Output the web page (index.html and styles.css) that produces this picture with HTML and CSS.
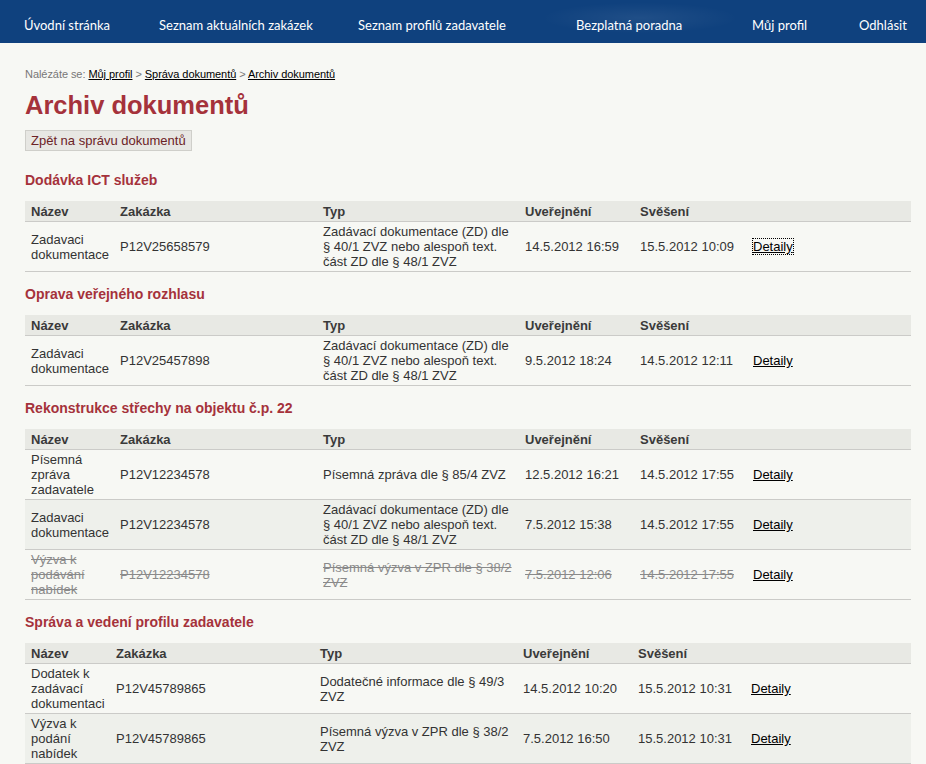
FILE: index.html
```html
<!DOCTYPE html>
<html lang="cs">
<head>
<meta charset="utf-8">
<title>Archiv dokumentů</title>
<link rel="stylesheet" href="styles.css">
</head>
<body>
<nav class="topbar">
  <a class="nav-link" href="#">Úvodní stránka</a>
  <a class="nav-link" href="#">Seznam aktuálních zakázek</a>
  <a class="nav-link" href="#">Seznam profilů zadavatele</a>
  <a class="nav-link" href="#">Bezplatná poradna</a>
  <a class="nav-link" href="#">Můj profil</a>
  <a class="nav-link" href="#">Odhlásit</a>
</nav>
<main class="content">
  <p class="breadcrumb"><span class="crumb-label">Nalézáte se:</span> <a href="#">Můj profil</a> <span class="crumb-sep">&gt;</span> <a href="#">Správa dokumentů</a> <span class="crumb-sep">&gt;</span> <a href="#">Archiv dokumentů</a></p>
  <h1 class="page-title">Archiv dokumentů</h1>
  <button class="back-btn" type="button">Zpět na správu dokumentů</button>

  <section class="tender">
    <h2 class="tender-title">Dodávka ICT služeb</h2>
    <table class="docs">
      <colgroup><col class="c-name"><col class="c-ref"><col class="c-type"><col class="c-pub"><col class="c-rem"><col class="c-act"></colgroup>
      <thead><tr><th>Název</th><th>Zakázka</th><th>Typ</th><th>Uveřejnění</th><th>Svěšení</th><th></th></tr></thead>
      <tbody>
        <tr><td>Zadavaci dokumentace</td><td>P12V25658579</td><td>Zadávací dokumentace (ZD) dle § 40/1 ZVZ nebo alespoň text. část ZD dle § 48/1 ZVZ</td><td>14.5.2012 16:59</td><td>15.5.2012 10:09</td><td><a class="detail focused" href="#">Detaily</a></td></tr>
      </tbody>
    </table>
  </section>

  <section class="tender">
    <h2 class="tender-title">Oprava veřejného rozhlasu</h2>
    <table class="docs">
      <colgroup><col class="c-name"><col class="c-ref"><col class="c-type"><col class="c-pub"><col class="c-rem"><col class="c-act"></colgroup>
      <thead><tr><th>Název</th><th>Zakázka</th><th>Typ</th><th>Uveřejnění</th><th>Svěšení</th><th></th></tr></thead>
      <tbody>
        <tr><td>Zadávaci dokumentace</td><td>P12V25457898</td><td>Zadávací dokumentace (ZD) dle § 40/1 ZVZ nebo alespoň text. část ZD dle § 48/1 ZVZ</td><td>9.5.2012 18:24</td><td>14.5.2012 12:11</td><td><a class="detail" href="#">Detaily</a></td></tr>
      </tbody>
    </table>
  </section>

  <section class="tender">
    <h2 class="tender-title">Rekonstrukce střechy na objektu č.p. 22</h2>
    <table class="docs">
      <colgroup><col class="c-name"><col class="c-ref"><col class="c-type"><col class="c-pub"><col class="c-rem"><col class="c-act"></colgroup>
      <thead><tr><th>Název</th><th>Zakázka</th><th>Typ</th><th>Uveřejnění</th><th>Svěšení</th><th></th></tr></thead>
      <tbody>
        <tr><td>Písemná zpráva zadavatele</td><td>P12V12234578</td><td>Písemná zpráva dle § 85/4 ZVZ</td><td>12.5.2012 16:21</td><td>14.5.2012 17:55</td><td><a class="detail" href="#">Detaily</a></td></tr>
        <tr><td>Zadavaci dokumentace</td><td>P12V12234578</td><td>Zadávací dokumentace (ZD) dle § 40/1 ZVZ nebo alespoň text. část ZD dle § 48/1 ZVZ</td><td>7.5.2012 15:38</td><td>14.5.2012 17:55</td><td><a class="detail" href="#">Detaily</a></td></tr>
        <tr class="revoked"><td>Výzva k podávání nabídek</td><td>P12V12234578 </td><td>Písemná výzva v ZPR dle § 38/2 ZVZ</td><td>7.5.2012 12:06</td><td>14.5.2012 17:55</td><td><a class="detail" href="#">Detaily</a></td></tr>
      </tbody>
    </table>
  </section>

  <section class="tender">
    <h2 class="tender-title">Správa a vedení profilu zadavatele</h2>
    <table class="docs docs-wide">
      <colgroup><col class="c-name"><col class="c-ref"><col class="c-type"><col class="c-pub"><col class="c-rem"><col class="c-act"></colgroup>
      <thead><tr><th>Název</th><th>Zakázka</th><th>Typ</th><th>Uveřejnění</th><th>Svěšení</th><th></th></tr></thead>
      <tbody>
        <tr><td>Dodatek k zadávací dokumentaci</td><td>P12V45789865</td><td>Dodatečné informace dle § 49/3 ZVZ</td><td>14.5.2012 10:20</td><td>15.5.2012 10:31</td><td><a class="detail" href="#">Detaily</a></td></tr>
        <tr><td>Výzva k podání nabídek</td><td>P12V45789865</td><td>Písemná výzva v ZPR dle § 38/2 ZVZ</td><td>7.5.2012 16:50</td><td>15.5.2012 10:31</td><td><a class="detail" href="#">Detaily</a></td></tr>
      </tbody>
    </table>
  </section>
</main>
</body>
</html>
```
FILE: styles.css
```css
html, body {
  margin: 0;
  padding: 0;
}
body {
  background: #f7f8f4;
  font-family: "Liberation Sans", Arial, sans-serif;
  color: #333;
  font-size: 13px;
}

/* top navigation */
.topbar {
  display: grid;
  grid-template-columns: 135px 199px 218px 176px 107px 1fr;
  align-items: center;
  height: 43px;
  padding: 6px 0 0 24px;
  box-sizing: border-box;
  background:
    radial-gradient(ellipse 140px 22px at 640px 18px, rgba(255,255,255,0.07), rgba(255,255,255,0) 70%),
    #0f417e;
}
.nav-link {
  color: #fff;
  text-decoration: none;
  font-family: Lato, "Open Sans", sans-serif;
  font-size: 13px;
  white-space: nowrap;
}

/* content */
.content {
  padding: 25px 15px 0 25px;
}
.breadcrumb {
  margin: 0;
  font-size: 11px;
  line-height: 13px;
  color: #777;
  letter-spacing: -0.06px;
}
.breadcrumb a {
  color: #000;
  text-decoration: underline;
}
.crumb-sep {
  color: #777;
}
.page-title {
  margin: 9px 0 10px;
  font-size: 25.5px;
  line-height: 30px;
  font-weight: bold;
  color: #a5323b;
}
.back-btn {
  display: block;
  margin: 0 0 21px;
  height: 21px;
  padding: 2px 5px;
  font-family: "Liberation Sans", Arial, sans-serif;
  font-size: 13px;
  line-height: 15px;
  color: #6b2226;
  background: #e7e7e3;
  border: 1px solid #cfcfca;
  border-radius: 0;
}

.tender-title {
  margin: 14px 0 13px;
  font-size: 14px;
  line-height: 16px;
  font-weight: bold;
  color: #a5323b;
}

/* tables */
.docs {
  width: 886px;
  table-layout: fixed;
  border-collapse: collapse;
  font-size: 13px;
  line-height: 15px;
}
.c-name { width: 89px; }
.c-ref { width: 203px; }
.c-type { width: 202px; }
.c-pub { width: 115px; }
.c-rem { width: 113px; }
.c-act { width: 164px; }
.docs-wide .c-name { width: 85px; }
.docs-wide .c-ref { width: 204px; }
.docs-wide .c-type { width: 203px; }
.docs-wide .c-act { width: 166px; }

.docs th {
  text-align: left;
  font-weight: bold;
  color: #3a3a3a;
  background: #e8e9e4;
  padding: 3px 6px 2px;
  border-bottom: 1px solid #cbcbc8;
}
.docs td {
  padding: 2px 6px;
  vertical-align: middle;
  color: #333;
  border-bottom: 1px solid #cbcbc8;
}
.docs tbody tr:nth-child(even) td {
  background: #eef0eb;
}
.detail {
  color: #000;
  text-decoration: underline;
}
.detail.focused {
  outline: 1px dotted #000;
}
.revoked td {
  color: #8a8a8a;
  text-decoration: line-through;
}
.revoked td:last-child {
  text-decoration: none;
}
```
